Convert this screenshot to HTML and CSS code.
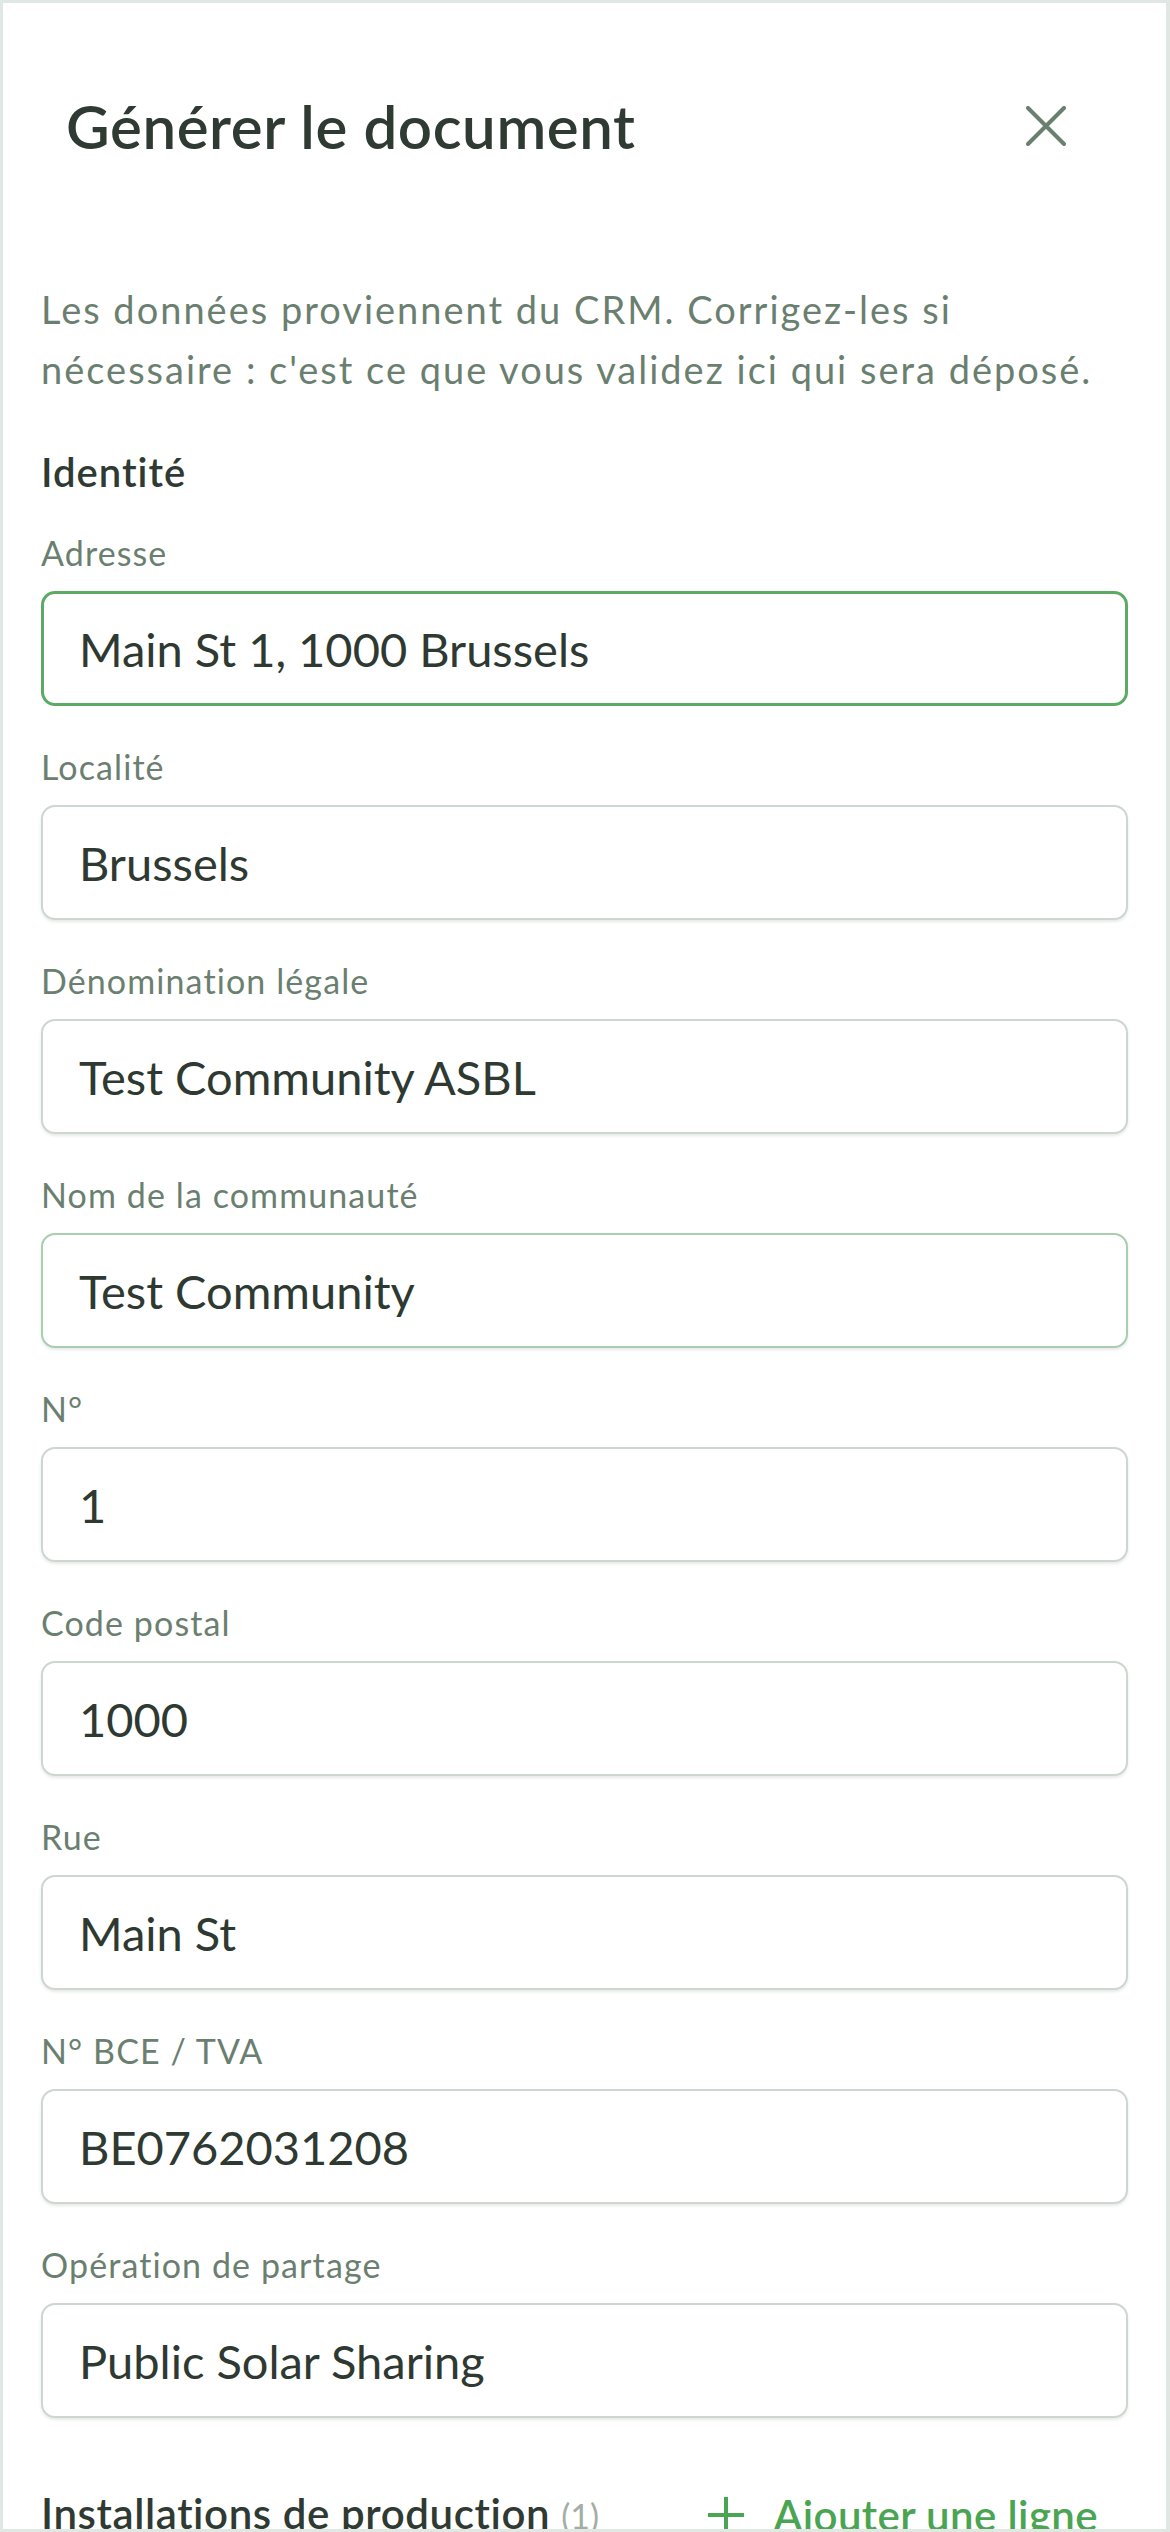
FILE: index.html
```html
<!DOCTYPE html>
<html lang="fr">
	<head>
		<meta charset="utf-8">
		<title>Générer le document</title>
		<link rel="stylesheet" href="styles.css">
	</head>
	<body>
		<div class="sheet">
			<header class="sheet-header">
				<h1>Générer le document</h1>
				<button class="close" aria-label="Fermer">
					<svg viewBox="0 0 40 40" width="40" height="40"><path d="M2 2 L38 38 M38 2 L2 38" stroke="currentColor" stroke-width="4" stroke-linecap="round" fill="none"/></svg>
				</button>
			</header>

			<div class="sheet-body">
				<p class="intro">Les données proviennent du CRM. Corrigez-les si nécessaire : c'est ce que vous validez ici qui sera déposé.</p>

				<h2 class="section-title">Identité</h2>

				<div class="fields">
					<label class="field">
						<span class="field-label">Adresse</span>
						<input class="field-input is-focused" value="Main St 1, 1000 Brussels">
					</label>
					<label class="field">
						<span class="field-label">Localité</span>
						<input class="field-input" value="Brussels">
					</label>
					<label class="field">
						<span class="field-label">Dénomination légale</span>
						<input class="field-input" value="Test Community ASBL">
					</label>
					<label class="field">
						<span class="field-label">Nom de la communauté</span>
						<input class="field-input is-hover" value="Test Community">
					</label>
					<label class="field">
						<span class="field-label">N°</span>
						<input class="field-input" value="1">
					</label>
					<label class="field">
						<span class="field-label">Code postal</span>
						<input class="field-input" value="1000">
					</label>
					<label class="field">
						<span class="field-label">Rue</span>
						<input class="field-input" value="Main St">
					</label>
					<label class="field">
						<span class="field-label">N° BCE / TVA</span>
						<input class="field-input" value="BE0762031208">
					</label>
					<label class="field">
						<span class="field-label">Opération de partage</span>
						<input class="field-input" value="Public Solar Sharing">
					</label>
				</div>

				<div class="list-head">
					<h2 class="list-title">Installations de production <span class="count">(1)</span></h2>
					<button class="add-row">
						<svg viewBox="0 0 40 40" width="40" height="40"><path d="M20 2 V38 M2 20 H38" stroke="currentColor" stroke-width="4" fill="none"/></svg>
						Ajouter une ligne
					</button>
				</div>
			</div>
		</div>
	</body>
</html>
```

FILE: styles.css
```css
* {
	margin: 0; padding: 0;
	box-sizing: border-box;
}

html, body {
	height: 100%;
}

body {
	background: #e1e8e3;
	padding: 3px 4px 3px 3px;
	font-family: "Lato", "Noto Sans", sans-serif;
	color: #2e3932;
	overflow: hidden;
}

.sheet {
	background: #fff;
	height: 100%;
	overflow: hidden;
}

.sheet-header {
	display: flex;
	align-items: center;
	justify-content: space-between;
	padding: 88px 100px 0 63px;
}

.sheet-header h1 {
	font-size: 60px;
	line-height: 70px;
	font-weight: 600;
	letter-spacing: 0.6px;
	color: #2f3a33;
}

.close {
	background: none;
	border: none;
	color: #6b7f70;
	width: 40px;
	height: 40px;
	display: flex;
}

.sheet-body {
	padding: 118px 38px 0 38px;
}

.intro {
	font-size: 38px;
	line-height: 60px;
	letter-spacing: 2px;
	color: #6b7f70;
}

.section-title {
	margin-top: 50px;
	font-size: 40px;
	line-height: 46px;
	font-weight: 600;
	letter-spacing: 1px;
	color: #2f3a33;
}

.fields {
	margin-top: 38px;
	display: flex;
	flex-direction: column;
	gap: 41px;
}

.field {
	display: flex;
	flex-direction: column;
	gap: 18px;
}

.field-label {
	font-size: 34px;
	line-height: 40px;
	letter-spacing: 1.1px;
	color: #6b7f70;
}

.field-input {
	height: 115px;
	border: 2px solid #cdd7cf;
	border-radius: 14px;
	padding: 0 36px;
	font-family: inherit;
	font-size: 47px;
	color: #2e3932;
	background: #fff;
	box-shadow: 0 2px 3px rgba(60, 80, 65, 0.12);
	outline: none;
}

.field-input.is-focused {
	border: 3px solid #5caa66;
	padding: 0 35px;
	box-shadow: none;
}

.field-input.is-hover {
	border-color: #a9cdb0;
}

.list-head {
	margin-top: 70px;
	display: flex;
	align-items: center;
	justify-content: space-between;
}

.list-title {
	font-size: 42px;
	line-height: 50px;
	font-weight: 600;
	letter-spacing: 0.6px;
	color: #2f3a33;
}

.count {
	font-weight: 400;
	font-size: 34px;
	letter-spacing: 0;
	color: #a2aea5;
}

.add-row {
	display: flex;
	align-items: center;
	gap: 28px;
	background: none;
	border: none;
	font-family: inherit;
	font-size: 42px;
	font-weight: 600;
	letter-spacing: 0.4px;
	color: #4aa553;
	padding-right: 30px;
}
```
